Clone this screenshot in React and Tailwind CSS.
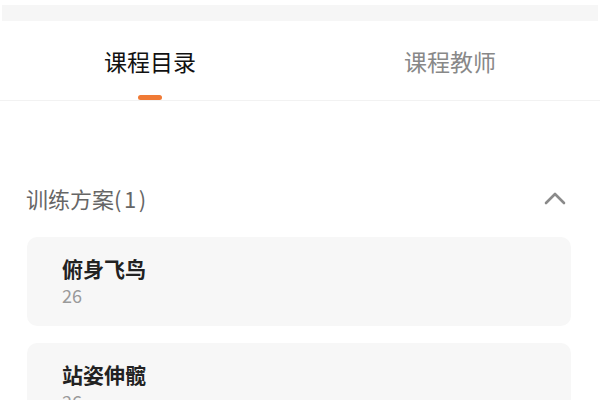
import React from "react";

const font = { fontFamily: '"Noto Sans CJK SC", "Noto Sans", sans-serif' };

function Card({ title, num }) {
  return (
    <div className="mx-[27px] mr-[29px] rounded-[10px] bg-[#f7f7f7] pl-[35px] pt-[21px] pb-[22px]">
      <div className="text-[21px] leading-[21px] font-bold text-[#222]">{title}</div>
      <div className="mt-[7px] text-[18px] leading-[18px] text-[#9a9a9a]">{num}</div>
    </div>
  );
}

export default function App() {
  return (
    <div className="w-[600px] h-[400px] overflow-hidden bg-white" style={font}>
      <div className="h-[5px]" />
      <div className="mx-[2px] h-[16px] bg-[#f6f6f6]" />
      <div className="flex h-[80px] border-b border-[#f2f2f2]">
        <div className="flex w-[300px] flex-col items-center pt-[28px]">
          <div className="text-[23px] leading-[24px] text-[#111]">课程目录</div>
          <div className="mt-[22px] h-[6px] w-[24px] rounded-full bg-[#f07a35]" />
        </div>
        <div className="flex w-[300px] flex-col items-center pt-[28px]">
          <div className="text-[23px] leading-[24px] text-[#888]">课程教师</div>
        </div>
      </div>
      <div className="mt-[86px] flex items-center justify-between pl-[26px] pr-[34px]">
        <div className="text-[22px] leading-[22px] text-[#666]">
          训练方案<span className="tracking-[2.5px]">(1)</span>
        </div>
        <svg width="22" height="14" viewBox="0 0 22 14" className="block">
          <path d="M2 12 L11 3 L20 12" fill="none" stroke="#8a8a8a" strokeWidth="2.6" strokeLinecap="round" strokeLinejoin="round" />
        </svg>
      </div>
      <div className="mt-[28px] flex flex-col gap-[17px]">
        <Card title="俯身飞鸟" num="26" />
        <Card title="站姿伸髋" num="26" />
      </div>
    </div>
  );
}
